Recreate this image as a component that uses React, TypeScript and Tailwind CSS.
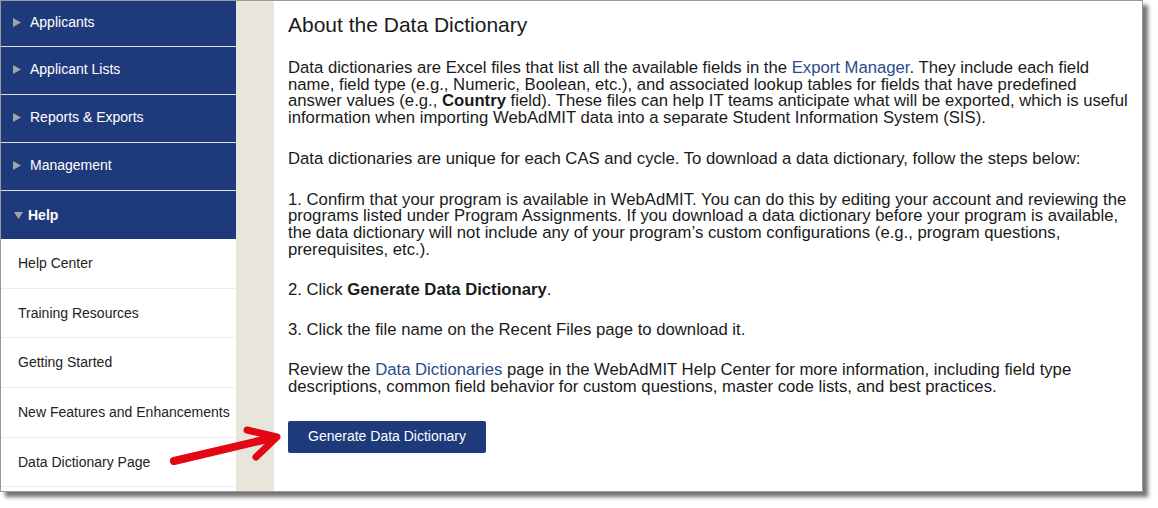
import React from "react";

const navy = "bg-[#1f3a7a]";

const mainItems = ["Applicants", "Applicant Lists", "Reports & Exports", "Management"];
const helpItems = [
	"Help Center",
	"Training Resources",
	"Getting Started",
	"New Features and Enhancements",
	"Data Dictionary Page",
];

function Caret({ down }: { down?: boolean }) {
	// little gray triangle before each menu label
	return down ? (
		<svg width="9" height="8" viewBox="0 0 9 8" className="mr-[5px]">
			<polygon points="0,1 9,1 4.5,8" fill="#a3a3a3" />
		</svg>
	) : (
		<svg width="8" height="9" viewBox="0 0 8 9" className="mr-[9px]">
			<polygon points="0,0 8,4.5 0,9" fill="#a3a3a3" />
		</svg>
	);
}

function Sidebar() {
	return (
		<nav className="w-[235px] flex-none flex flex-col bg-white">
			{mainItems.map((label, i) => (
				<div
					key={label}
					className={`${navy} flex items-center pl-[12px] pb-[2px] text-white text-[14px] ${
						i === 0 ? "h-[45px]" : "h-[48px] border-t border-[#dcdcdc]"
					}`}
				>
					<Caret />
					<span>{label}</span>
				</div>
			))}
			<div className={`${navy} h-[49px] border-t border-[#dcdcdc] flex items-center pl-[13px] text-white text-[14px] font-bold`}>
				<Caret down />
				<span>Help</span>
			</div>
			{helpItems.map((label) => (
				<div
					key={label}
					className="h-[49.7px] flex-none border-b border-[#ececec] flex items-center pl-[17px] text-[14px] text-[#222]"
				>
					{label}
				</div>
			))}
		</nav>
	);
}

function Link({ children }: { children: React.ReactNode }) {
	return <span className="text-[#2b4a8e]">{children}</span>;
}

function Content() {
	return (
		<main className="flex-1 min-w-0 overflow-hidden pl-[14px] pt-[11px] text-[#1a1a1a] text-[16.7px] leading-[16.7px] whitespace-nowrap">
			<h1 className="text-[21px] leading-[26px]">About the Data Dictionary</h1>
			<p className="mt-[22px]">
				Data dictionaries are Excel files that list all the available fields in the <Link>Export Manager</Link>. They
				include each field
				<br />
				name, field type (e.g., Numeric, Boolean, etc.), and associated lookup tables for fields that have predefined
				<br />
				answer values (e.g., <b>Country</b> field). These files can help IT teams anticipate what will be exported, which
				is useful
				<br />
				information when importing WebAdMIT data into a separate Student Information System (SIS).
			</p>
			<p className="mt-[24px]">
				Data dictionaries are unique for each CAS and cycle. To download a data dictionary, follow the steps below:
			</p>
			<p className="mt-[24px]">
				1. Confirm that your program is available in WebAdMIT. You can do this by editing your account and reviewing the
				<br />
				programs listed under Program Assignments. If you download a data dictionary before your program is available,
				<br />
				the data dictionary will not include any of your program’s custom configurations (e.g., program questions,
				<br />
				prerequisites, etc.).
			</p>
			<p className="mt-[23.5px]">
				2. Click <b>Generate Data Dictionary</b>.
			</p>
			<p className="mt-[23.5px]">3. Click the file name on the Recent Files page to download it.</p>
			<p className="mt-[23.5px]">
				Review the <Link>Data Dictionaries</Link> page in the WebAdMIT Help Center for more information, including field
				type
				<br />
				descriptions, common field behavior for custom questions, master code lists, and best practices.
			</p>
			<button
				type="button"
				className={`${navy} mt-[25px] w-[198px] h-[32px] rounded-[2px] text-white text-[14px]`}
			>
				Generate Data Dictionary
			</button>
		</main>
	);
}

export default function App() {
	return (
		<div className="relative w-[1158px] h-[508px] bg-white overflow-hidden font-['Liberation_Sans',Arial,sans-serif]">
			<div className="flex w-[1143px] h-[492px] border border-[#9a9a9a] bg-white shadow-[5px_5px_4px_rgba(0,0,0,0.55)] overflow-hidden">
				<Sidebar />
				<div className="w-[38px] flex-none bg-[#e8e6da]" />
				<Content />
			</div>
			{/* red callout arrow */}
			<svg className="absolute left-0 top-0 pointer-events-none" width="1158" height="508">
				<line x1="174" y1="461" x2="272" y2="438" stroke="#e30613" strokeWidth="8" strokeLinecap="round" />
				<polyline
					points="247,430 277,437 256,457"
					fill="none"
					stroke="#e30613"
					strokeWidth="7"
					strokeLinecap="round"
					strokeLinejoin="round"
				/>
			</svg>
		</div>
	);
}
